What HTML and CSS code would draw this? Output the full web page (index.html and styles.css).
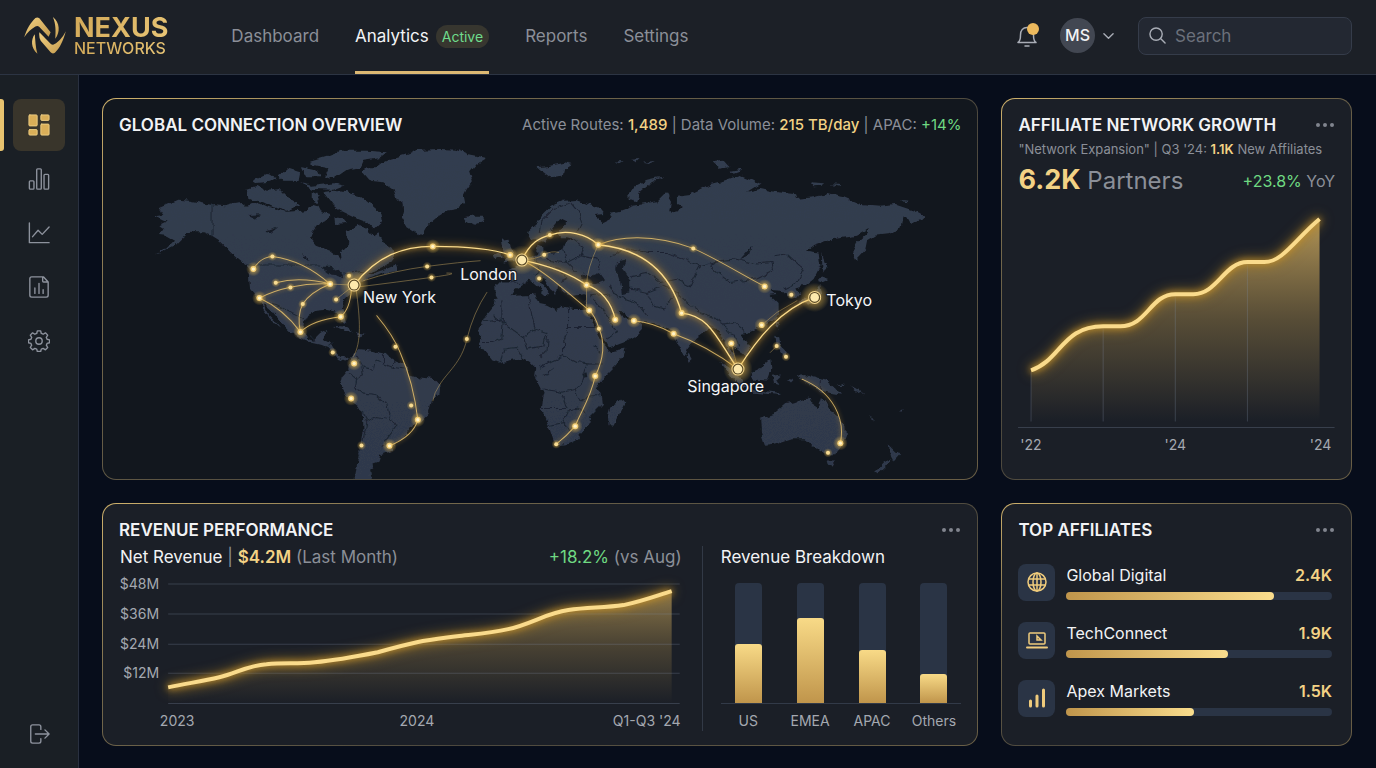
FILE: index.html
```html
<!DOCTYPE html>
<html lang="en">
<head>
  <meta charset="UTF-8" />
  <meta name="viewport" content="width=device-width, initial-scale=1.0"/>
  <title>Nexus Networks - Analytics</title>
  <link rel="stylesheet" href="styles.css">
</head>
<body>

  <header class="topbar">
    <a class="logo" href="#">
      <svg class="logo-mark" viewBox="0 0 126 112" aria-hidden="true">
        <defs>
          <linearGradient id="gold" x1="0" y1="0" x2="1" y2="1">
            <stop offset="0" stop-color="#f3d283"/>
            <stop offset="1" stop-color="#c2994c"/>
          </linearGradient>
        </defs>
        <path fill="url(#gold)" d="M0 61C8 36 20 16 34 3Q40-1 46 4L80 46L74 60L46 30Q40 25 34 29C22 36 10 46 0 61Z"/>
        <path fill="url(#gold)" d="M126 43C118 72 108 94 93 108Q86 113 80 107L50 72Q44 62 46 46L80 81Q86 86 92 82C104 75 116 63 126 43Z"/>
        <path fill="url(#gold)" d="M32 52C20 68 20 94 40 111C34 90 34 72 32 52Z"/>
        <path fill="url(#gold)" d="M87 0C108 16 110 46 94 66C96 42 96 22 87 0Z"/>
      </svg>
      <span class="logo-text">
        <span class="logo-name">NEXUS</span>
        <span class="logo-sub">NETWORKS</span>
      </span>
    </a>

    <nav class="nav">
      <a href="#">Dashboard</a>
      <a href="#" class="current">Analytics <span class="pill">Active</span></a>
      <a href="#">Reports</a>
      <a href="#">Settings</a>
    </nav>

    <div class="tools">
      <button class="bell" aria-label="Notifications">
        <svg viewBox="0 0 24 24"><path d="M3 18.500C5.500 17 5.500 14 5.500 11C5.500 6.500 8 3.500 12 3.500S18.500 6.500 18.500 11C18.500 14 18.500 17 21 18.500ZM10 22h4"/></svg>
        <span class="bell-dot"></span>
      </button>
      <button class="user" aria-label="Account">
        <span class="avatar">MS</span>
        <svg viewBox="0 0 12 12"><path d="M1 3.500l5 5 5-5"/></svg>
      </button>
      <label class="search">
        <svg viewBox="0 0 18 18"><circle cx="7.500" cy="7.500" r="6.500"/><path d="M12.500 12.500L17 17"/></svg>
        <input type="search" placeholder="Search" aria-label="Search" />
      </label>
    </div>
  </header>

  <div class="shell">
    <aside class="sidebar">
      <a href="#" class="side-link active" aria-label="Overview">
        <svg viewBox="0 0 24 24" class="solid"><rect x="1" y="1" width="9" height="12" rx="1"/><rect x="14" y="1" width="9" height="6" rx="1"/><rect x="1" y="17" width="9" height="6" rx="1"/><rect x="14" y="11" width="9" height="12" rx="1"/></svg>
      </a>
      <a href="#" class="side-link" aria-label="Statistics">
        <svg viewBox="0 0 24 24"><rect x="1.500" y="14" width="5" height="9" rx="1"/><rect x="9.500" y="1" width="5" height="22" rx="1"/><rect x="17.500" y="7" width="5" height="16" rx="1"/></svg>
      </a>
      <a href="#" class="side-link" aria-label="Trends">
        <svg viewBox="0 0 24 24"><path d="M1.500 1v21.500H23M5 16l6-7 4.500 4.500L23 5.500"/></svg>
      </a>
      <a href="#" class="side-link" aria-label="Reports">
        <svg viewBox="0 0 24 24"><path d="M4 1h13l5 5.500V21a2 2 0 0 1-2 2H4a2 2 0 0 1-2-2V3a2 2 0 0 1 2-2ZM16 1v4.500a1 1 0 0 0 1 1h5M7.500 13v6M12 8v11M16.500 15v4"/></svg>
      </a>
      <a href="#" class="side-link" aria-label="Settings">
        <svg viewBox="0 0 24 24"><circle cx="12" cy="12" r="3.500"/><path d="M10.200 1h3.600l.7 2.800 2 .8 2.500-1.500 2.500 2.500-1.500 2.500.8 2 2.700.6v3.200l-2.700.7-.8 2 1.500 2.500-2.500 2.500-2.500-1.500-2 .8-.7 2.600h-3.600l-.7-2.600-2-.8L5 21.600l-2.500-2.500L4 16.600l-.8-2L.5 13.900v-3.200l2.700-.6.8-2-1.500-2.500L5 3.100l2.500 1.500 2-.8Z"/></svg>
      </a>
      <a href="#" class="side-link logout" aria-label="Log out">
        <svg viewBox="0 0 24 24"><path d="M14 7V4a2 2 0 0 0-2-2H5a2 2 0 0 0-2 2v16a2 2 0 0 0 2 2h7a2 2 0 0 0 2-2v-3M8 12h15M18.500 7.500L23 12l-4.500 4.500"/></svg>
      </a>
    </aside>

    <main class="grid">

      <section class="card map-card">
        <div class="card-head">
          <h2>GLOBAL CONNECTION OVERVIEW</h2>
          <p class="stats">Active Routes: <b>1,489</b> <i>|</i> Data Volume: <b>215 TB/day</b> <i>|</i> APAC: <em>+14%</em></p>
        </div>
        <svg class="map" viewBox="103 144 874 336" role="img" aria-label="World map of active routes">
          <defs>
            <filter id="coast" x="0" y="0" width="1" height="1">
              <feTurbulence type="fractalNoise" baseFrequency="0.12" numOctaves="3" seed="4"/>
              <feDisplacementMap in="SourceGraphic" scale="6" xChannelSelector="R" yChannelSelector="G"/>
            </filter>
            <linearGradient id="landFill" gradientUnits="userSpaceOnUse" x1="0" y1="450" x2="0" y2="1440">
              <stop offset="0" stop-color="#333d4f"/>
              <stop offset="1" stop-color="#2f394b"/>
            </linearGradient>
            <radialGradient id="halo">
              <stop offset="0" stop-color="#f0c050" stop-opacity=".75"/>
              <stop offset="1" stop-color="#f0c050" stop-opacity="0"/>
            </radialGradient>
            <g id="dot">
              <circle r="22" fill="url(#halo)"/>
              <circle r="9" fill="#f3cf78"/>
              <circle r="5" fill="#fff3c8"/>
            </g>
            <g id="small">
              <circle r="14" fill="url(#halo)"/>
              <circle r="6" fill="#f8dc93"/>
            </g>
            <g id="hub">
              <circle r="44" fill="url(#halo)"/>
              <circle r="18" fill="#5a4a26" stroke="#f5d890" stroke-width="3"/>
              <circle r="13" fill="#fde9ac"/>
            </g>
          </defs>

          <g filter="url(#coast)">
            <g transform="scale(.33333)">
              <g class="land">
                <!-- north america -->
                <path d="M465 652L490 648L475 628L505 615L535 602L570 605L636 618L675 622L700 615L730 612L740 620L760 615L775 610L800 622L830 632L860 638L900 636L925 632L940 615L955 620L965 640L990 648L990 658L960 670L940 695L933 720L950 740L990 755L1010 770L1025 785L1022 760L1045 735L1040 700L1055 685L1070 675L1100 690L1120 710L1135 700L1150 730L1180 750L1185 770L1170 790L1150 802L1120 815L1100 830L1150 812L1190 795L1197 815L1150 822L1120 835L1090 845L1075 860L1058 872L1055 880L1035 900L1028 925L1035 950L1040 968L1032 975L1020 955L1005 940L980 935L950 938L925 950L915 970L912 990L918 1005L922 1020L940 1025L960 1005L982 992L970 1025L990 1030L1005 1055L1020 1070L1050 1078L1035 1084L1010 1074L985 1047L960 1037L930 1030L900 1020L875 1005L855 985L835 960L815 935L790 915L805 945L820 960L840 985L825 975L808 953L790 930L775 900L750 870L745 810L730 790L705 770L685 750L660 725L636 710L610 700L585 700L570 698L550 715L525 740L495 755L465 763L505 745L525 725L500 710L480 708L490 690L475 680L500 668Z"/>
                <!-- arctic islands -->
                <path d="M740 570L770 560L800 575L840 570L870 600L900 620L860 635L820 625L790 610L745 600ZM755 545L800 525L830 535L810 548L765 552ZM860 508L900 520L895 545L850 545L835 530ZM900 552L940 560L1000 553L1030 560L1000 572L940 570ZM930 485L980 470L1020 455L1100 455L1160 460L1140 475L1090 482L1080 505L1040 512L1000 540L975 530L985 508L940 498ZM970 580L1000 575L1040 580L1080 592L1110 615L1140 640L1145 665L1120 690L1100 670L1060 655L1020 635L1000 620L985 600ZM1003 655L1030 658L1040 672L1005 675ZM935 578L962 590L952 612L935 605ZM905 505L950 515L960 535L920 535Z"/>
                <!-- greenland, iceland -->
                <path d="M1085 515L1100 505L1130 505L1150 490L1170 480L1220 465L1250 453L1320 450L1370 452L1400 465L1460 477L1430 495L1410 520L1418 545L1400 570L1390 590L1395 615L1370 630L1340 635L1310 655L1280 680L1265 708L1245 700L1222 685L1205 655L1215 620L1190 600L1180 570L1150 550L1110 545ZM1390 655L1415 650L1445 650L1452 665L1425 677L1400 670Z"/>
                <path d="M1000 980L1035 983L1062 1000L1035 995ZM1067 1000L1097 1005L1075 1012Z"/>
                <!-- south america -->
                <path d="M1060 1065L1075 1050L1095 1052L1130 1058L1160 1065L1175 1080L1215 1095L1225 1125L1260 1135L1300 1140L1318 1158L1315 1180L1295 1205L1285 1245L1260 1270L1235 1280L1220 1300L1205 1320L1190 1330L1175 1340L1180 1355L1140 1370L1135 1385L1120 1390L1122 1405L1110 1415L1118 1450L1062 1450L1070 1400L1080 1340L1090 1290L1088 1235L1055 1210L1035 1180L1020 1155L1025 1130L1045 1105L1050 1080Z"/>
                <!-- europe and asia -->
                <path d="M1580 715L1582 695L1610 670L1630 645L1655 620L1690 605L1730 603L1760 615L1800 630L1812 645L1780 648L1805 670L1835 655L1830 642L1860 635L1900 620L1935 615L1970 610L1985 595L2000 580L2015 605L2010 640L2030 645L2050 625L2030 615L2030 590L2070 585L2090 575L2130 555L2170 545L2220 528L2250 540L2278 555L2240 578L2280 570L2320 578L2380 585L2385 600L2440 595L2480 585L2530 595L2580 615L2640 620L2680 615L2740 635L2775 655L2740 668L2710 655L2705 680L2670 705L2625 710L2600 725L2595 750L2565 782L2555 760L2570 730L2600 705L2605 690L2570 710L2500 720L2440 740L2420 755L2455 760L2460 800L2440 840L2415 860L2388 868L2397 885L2385 900L2367 895L2345 875L2310 873L2330 888L2310 890L2335 915L2335 940L2320 960L2300 975L2270 990L2245 1000L2225 1005L2235 1025L2250 1050L2235 1070L2220 1060L2200 1045L2193 1030L2190 1045L2200 1070L2212 1100L2195 1085L2185 1050L2175 1025L2165 1020L2155 1000L2145 988L2130 985L2110 1000L2085 1020L2065 1045L2055 1072L2045 1065L2030 1035L2018 1005L2005 990L1980 980L1940 970L1910 968L1880 950L1860 933L1855 935L1870 955L1890 963L1910 965L1925 975L1925 990L1900 1015L1870 1030L1830 1045L1820 1040L1805 1010L1795 990L1775 950L1765 930L1760 910L1758 895L1755 885L1720 890L1690 885L1685 865L1670 860L1668 885L1650 870L1635 845L1620 835L1615 843L1640 872L1650 880L1638 892L1628 875L1600 850L1585 845L1570 855L1545 870L1530 895L1500 910L1487 890L1485 850L1530 850L1535 830L1520 815L1540 805L1570 790L1590 775L1610 765L1615 740L1630 745L1628 760L1660 760L1690 750L1695 730L1720 720L1700 715L1680 715L1675 700L1700 670L1680 660L1655 690L1645 710L1640 730L1625 730L1610 720L1590 722Z"/>
                <path d="M1505 725L1525 722L1530 745L1547 770L1545 785L1510 790L1520 770L1510 755ZM1480 765L1500 755L1505 772L1488 780Z"/>
                <path d="M1612 505L1650 500L1690 492L1715 498L1695 510L1690 530L1650 535L1630 520ZM1880 595L1900 565L1940 545L1988 535L1945 556L1918 578L1908 606ZM2140 490L2170 485L2188 505L2160 508ZM2190 515L2220 510L2225 515L2200 524ZM2430 550L2475 553L2470 560L2440 562ZM2490 556L2518 558L2510 563ZM2702 600L2725 602L2715 608ZM1840 488L1870 486L1860 493ZM1890 482L1915 480L1905 490ZM1925 488L1965 482L1945 492Z"/>
                <path d="M2465 755L2472 790L2481 798L2466 820ZM2465 832L2487 840L2465 850L2453 846ZM2460 855L2466 890L2440 915L2415 912L2390 922L2410 900L2440 895L2450 870ZM2325 968L2337 965L2332 990Z"/>
                <!-- africa -->
                <path d="M1485 900L1510 895L1545 890L1595 888L1605 885L1615 915L1640 920L1670 935L1680 920L1720 930L1757 930L1775 965L1790 1000L1805 1030L1820 1050L1828 1057L1875 1048L1870 1070L1845 1100L1810 1135L1790 1165L1802 1190L1805 1215L1770 1250L1768 1270L1750 1295L1725 1325L1700 1335L1670 1338L1660 1325L1645 1280L1622 1230L1625 1200L1630 1180L1615 1150L1602 1130L1605 1105L1590 1090L1570 1080L1540 1085L1495 1093L1475 1085L1450 1055L1435 1035L1440 1005L1435 990L1455 950L1480 920ZM1865 1198L1872 1215L1855 1250L1840 1280L1825 1278L1823 1250L1830 1225L1850 1215ZM2065 1063L2074 1080L2065 1088L2060 1075Z"/>
                <!-- south east asia, oceania -->
                <path d="M2325 1010L2337 1015L2340 1040L2355 1055L2365 1080L2345 1067L2330 1040ZM2160 1088L2185 1103L2225 1143L2240 1168L2225 1166L2192 1133ZM2253 1120L2285 1105L2310 1083L2313 1110L2300 1144L2265 1142ZM2315 1130L2342 1126L2328 1140L2337 1158L2318 1152ZM2250 1172L2300 1177L2345 1182L2335 1188L2255 1180ZM2395 1130L2415 1128L2440 1135L2480 1145L2505 1165L2522 1187L2490 1182L2465 1175L2440 1165L2410 1148ZM2508 1158L2535 1150L2530 1158ZM2550 1158L2570 1168L2595 1188L2565 1172ZM2605 1248L2628 1262L2618 1260ZM2693 1234L2708 1224L2703 1234ZM2360 1140L2380 1142L2372 1150Z"/>
                <path d="M2280 1260L2320 1245L2355 1215L2380 1210L2395 1205L2425 1195L2428 1210L2455 1228L2465 1193L2475 1210L2490 1235L2510 1250L2535 1280L2537 1310L2525 1340L2505 1365L2475 1365L2455 1355L2440 1340L2430 1335L2410 1320L2375 1320L2330 1335L2295 1340L2282 1300ZM2482 1384L2507 1384L2497 1402L2486 1400ZM2665 1338L2685 1358L2702 1362L2680 1387L2672 1372ZM2670 1380L2658 1402L2635 1424L2623 1420L2650 1390Z"/>
              </g>
              <g class="lakes">
                <path d="M1750 823L1770 835L1800 823L1814 842L1790 852L1755 852L1745 840ZM1850 790L1880 783L1870 810L1890 840L1890 880L1865 885L1860 850L1848 815ZM2220 780L2245 752L2254 743L2245 770ZM962 803L990 803L1022 815L1030 838L1010 828L990 826L970 812ZM745 648L782 646L770 660ZM793 698L835 684L812 702ZM910 758L924 785L912 775ZM1746 1124L1762 1120L1764 1134L1750 1136Z"/>
              </g>
              <g class="borders">
                <path d="M636 618V710M740 798H960M1030 825L1100 815M778 905L830 920L880 945L915 962M925 1005L945 1025M1000 1030L985 1042"/>
                <path d="M1070 1070L1090 1105L1120 1110L1125 1085L1150 1095L1180 1105L1210 1110M1045 1120L1070 1140L1090 1130L1085 1105M1070 1140L1065 1165L1090 1185L1130 1190L1160 1215L1165 1245L1190 1280L1160 1320L1145 1340M1090 1235L1100 1270L1130 1255L1160 1260M1100 1270L1090 1320L1075 1380M1150 1065L1150 1095M1180 1080V1105"/>
                <path d="M1505 900V960L1450 965M1510 960L1505 1020M1480 950L1570 1015L1605 990L1595 950L1585 890M1705 925V985H1790M1705 990L1690 1030M1570 1015L1580 1050L1630 1040L1640 1000L1605 990M1690 1030V1070L1645 1090L1615 1105M1690 1070L1730 1090L1765 1095L1810 1095M1760 1100L1745 1150L1725 1170L1685 1180L1630 1170M1625 1228H1700L1685 1185M1725 1170L1740 1210L1765 1190L1800 1190M1645 1280L1690 1270L1705 1235L1735 1230L1755 1240M1690 1270L1710 1295L1735 1265M1440 1030L1480 1030L1505 1020M1500 1090L1510 1050L1550 1045L1570 1080M1620 1075L1640 1055L1645 1010M1780 1040L1800 1060M1630 1130L1660 1110"/>
                <path d="M1620 700L1625 665L1660 630L1710 610L1735 640L1745 670L1730 700M1720 720L1750 740L1740 770L1700 790L1640 780M1690 750L1700 790L1730 820M1740 770L1790 780L1800 810M1600 770L1620 810L1600 830M1530 850L1570 855M1640 800L1680 810L1700 840L1680 850M1830 770L1880 750L1940 760L2000 760L2070 790L2100 800L2155 785M1890 830L1940 820L1980 850L2030 840L2070 860L2100 800M1890 870L1940 880L1960 920L1990 930M1830 860L1850 890L1910 910L1940 950M1940 880L1990 860L2030 880L2060 910L2100 940L2140 955L2170 975L2200 970L2235 1000M1990 930L2010 900L2030 880M1780 900L1820 950L1850 1000L1820 1020M1770 890L1830 885M2155 785L2205 780L2270 795L2315 790L2320 815L2270 840L2190 850L2150 820L2130 800ZM2320 770L2360 765L2410 810L2390 850L2350 870M2110 970L2140 985M2170 975L2185 1000L2205 1005L2215 1045M2460 1140V1175"/>
              </g>
            </g>
          </g>

          <g transform="scale(.33333)">
            <g class="route thin">
              <path d="M1090 845Q1180 815 1281 802T1440 785"/>
              <path d="M1062 865Q1200 848 1294 835T1340 822"/>
              <path d="M1068 870C1080 960 1085 1030 1060 1072"/>
              <path d="M1460 880Q1420 940 1400 1020C1385 1090 1340 1120 1318 1158Q1302 1180 1298 1205"/>
              <path d="M1565 783Q1610 780 1632 767T1675 760"/>
              <path d="M1794 737Q1760 810 1759 858V930"/>
              <path d="M2284 978L2330 940L2390 905M2193 1033L2213 1110M2329 1041L2310 1060"/>
              <path d="M1008 901L1062 858L990 855"/>
            </g>
            <g class="route mid">
              <path d="M760 810C780 775 810 772 817 772C880 780 940 810 990 855"/>
              <path d="M827 851Q900 832 990 855M778 897C830 870 910 850 990 855"/>
              <path d="M901 999Q890 950 908 915Q930 880 990 855M778 897Q850 930 901 999"/>
              <path d="M901 999C930 970 980 958 1022 953Q1050 930 1054 870"/>
              <path d="M1794 737C1850 715 1950 700 2079 748C2160 785 2230 830 2293 862"/>
              <path d="M1565 783C1640 820 1700 880 1767 934Q1785 950 1796 988C1815 1030 1810 1080 1785 1131C1770 1200 1740 1240 1725 1281Q1700 1310 1668 1335"/>
              <path d="M1901 965Q1960 970 2020 1004Q2120 1040 2213 1110"/>
              <path d="M2405 1140C2500 1180 2535 1260 2520 1332"/>
              <path d="M1130 950Q1180 1010 1200 1060Q1240 1150 1253 1262Q1240 1310 1168 1340"/>
            </g>
            <g class="route strong">
              <path d="M1062 858C1130 770 1210 742 1298 742S1480 750 1530 768"/>
              <path d="M1565 783C1590 730 1620 715 1649 708C1700 690 1760 705 1794 737"/>
              <path d="M1565 783C1650 800 1720 830 1759 858C1800 870 1835 910 1845 962"/>
              <path d="M1794 737C1930 750 2010 820 2044 942C2130 950 2150 1020 2213 1110"/>
              <path d="M2213 1110C2270 1020 2340 930 2443 895"/>
            </g>

            <use href="#dot" x="760" y="810"/><use href="#small" x="817" y="772"/><use href="#small" x="827" y="851"/>
            <use href="#small" x="871" y="865"/><use href="#dot" x="778" y="897"/><use href="#dot" x="990" y="855"/>
            <use href="#small" x="908" y="915"/><use href="#small" x="1008" y="901"/><use href="#small" x="1047" y="830"/>
            <use href="#dot" x="901" y="999"/><use href="#dot" x="1022" y="953"/><use href="#small" x="998" y="1060"/>
            <use href="#dot" x="1062" y="1093"/><use href="#dot" x="1053" y="1198"/><use href="#small" x="1233" y="1219"/>
            <use href="#dot" x="1253" y="1262"/><use href="#dot" x="1168" y="1340"/><use href="#small" x="1084" y="1339"/>
            <use href="#small" x="1186" y="1043"/><use href="#small" x="1400" y="1020"/><use href="#dot" x="1298" y="742"/>
            <use href="#small" x="1281" y="802"/><use href="#small" x="1294" y="835"/><use href="#dot" x="1530" y="768"/>
            <use href="#small" x="1649" y="708"/><use href="#dot" x="1794" y="737"/><use href="#small" x="2079" y="748"/>
            <use href="#dot" x="2293" y="862"/><use href="#small" x="1632" y="767"/><use href="#small" x="1617" y="838"/>
            <use href="#dot" x="1759" y="858"/><use href="#dot" x="1767" y="934"/><use href="#small" x="1796" y="989"/>
            <use href="#dot" x="1845" y="962"/><use href="#dot" x="1901" y="965"/><use href="#dot" x="2020" y="1004"/>
            <use href="#dot" x="2044" y="942"/><use href="#dot" x="1785" y="1131"/><use href="#dot" x="1725" y="1281"/>
            <use href="#small" x="1668" y="1335"/><use href="#dot" x="2193" y="1033"/><use href="#dot" x="2284" y="978"/>
            <use href="#small" x="2373" y="887"/><use href="#small" x="2329" y="1041"/><use href="#small" x="2357" y="1073"/>
            <use href="#dot" x="2520" y="1332"/><use href="#small" x="2483" y="1361"/>
            <use href="#hub" x="1062" y="858"/><use href="#hub" x="1565" y="783"/><use href="#hub" x="2443" y="895"/><use href="#hub" x="2213" y="1110"/>
          </g>

          <g class="city">
            <text x="363" y="304">New York</text>
            <text x="460" y="281">London</text>
            <text x="826" y="307">Tokyo</text>
            <text x="687" y="393">Singapore</text>
          </g>
        </svg>
      </section>

      <section class="card">
        <div class="card-head">
          <h2>AFFILIATE NETWORK GROWTH</h2>
          <button class="more" aria-label="More options"><span></span><span></span><span></span></button>
        </div>
        <p class="note">"Network Expansion" | Q3 '24: <b>1.1K</b> New Affiliates</p>
        <div class="figure">
          <p class="partners"><b>6.2K</b> Partners</p>
          <p class="yoy"><em>+23.8%</em> YoY</p>
        </div>
        <svg class="growth" viewBox="1018 204 316 256" role="img" aria-label="Partner growth, '22 to '24">
          <defs>
            <linearGradient id="areaFill" x1="0" y1="0" x2="0" y2="1">
              <stop offset="0" stop-color="#e6be68" stop-opacity=".75"/>
              <stop offset=".5" stop-color="#b8964f" stop-opacity=".38"/>
              <stop offset="1" stop-color="#b8964f" stop-opacity="0"/>
            </linearGradient>
          </defs>
          <path fill="url(#areaFill)" d="M1031 371C1061 361 1062 327 1103 327H1120C1147 327 1150 295 1175 295H1193C1217 295 1224 263 1247 263H1264C1282 263 1295 240 1319 220V422H1031Z"/>
          <path class="gridline" d="M1031 373V422M1103 328V422M1175 296V422M1247 264V422"/>
          <path class="gridline" d="M1018 428H1334"/>
          <path class="line" d="M1031 371C1061 361 1062 327 1103 327H1120C1147 327 1150 295 1175 295H1193C1217 295 1224 263 1247 263H1264C1282 263 1295 240 1319 220"/>
          <g class="axis middle">
            <text x="1031" y="451">'22</text>
            <text x="1175" y="451">'24</text>
            <text x="1320" y="451">'24</text>
          </g>
        </svg>
      </section>

      <section class="card">
        <div class="card-head">
          <h2>REVENUE PERFORMANCE</h2>
          <button class="more" aria-label="More options"><span></span><span></span><span></span></button>
        </div>
        <div class="revenue">
          <div class="revenue-main">
            <div class="revenue-head">
              <p><strong>Net Revenue</strong> <i>|</i> <b>$4.2M</b> (Last Month)</p>
              <p><em>+18.2%</em> (vs Aug)</p>
            </div>
            <svg class="revenue-chart" viewBox="120 573 560 157" role="img" aria-label="Net revenue, 2023 to Q3 '24">
              <path class="area" fill="url(#areaFill)" d="M168 687C187 683 202 681 219 677C236 673 248 665 266 664C284 662 296 664 314 662C336 660 357 656 377 652C391 648 402 645 416 642C430 639 441 638 456 636C474 634 490 633 507 629C530 624 545 613 567 610C586 607 602 608 622 605C641 601 651 597 670 591V703H168Z"/>
              <path class="gridline" d="M168 584H678M168 614H678M168 644H678M168 673H678M168 703H678"/>
              <path class="line" d="M168 687C187 683 202 681 219 677C236 673 248 665 266 664C284 662 296 664 314 662C336 660 357 656 377 652C391 648 402 645 416 642C430 639 441 638 456 636C474 634 490 633 507 629C530 624 545 613 567 610C586 607 602 608 622 605C641 601 651 597 670 591"/>
              <g class="axis end">
                <text x="159" y="589">$48M</text>
                <text x="159" y="619">$36M</text>
                <text x="159" y="649">$24M</text>
                <text x="159" y="678">$12M</text>
                <text x="679" y="726">Q1-Q3 '24</text>
              </g>
              <g class="axis middle">
                <text x="177" y="726">2023</text>
                <text x="416" y="726">2024</text>
              </g>
            </svg>
          </div>
          <div class="breakdown">
            <h3>Revenue Breakdown</h3>
            <div class="bars">
              <div class="bar"><div style="height: 49%"></div></div>
              <div class="bar"><div style="height: 71%"></div></div>
              <div class="bar"><div style="height: 44%"></div></div>
              <div class="bar"><div style="height: 24%"></div></div>
            </div>
            <div class="bar-labels">
              <span>US</span><span>EMEA</span><span>APAC</span><span>Others</span>
            </div>
          </div>
        </div>
      </section>

      <section class="card">
        <div class="card-head">
          <h2>TOP AFFILIATES</h2>
          <button class="more" aria-label="More options"><span></span><span></span><span></span></button>
        </div>
        <ul class="affiliates">
          <li>
            <span class="tile"><svg viewBox="0 0 22 22"><circle cx="11" cy="11" r="9"/><ellipse cx="11" cy="11" rx="4" ry="9"/><path d="M11 2v18M3 8h16M3 14h16"/></svg></span>
            <div class="affiliate">
              <div class="affiliate-head"><span>Global Digital</span><b>2.4K</b></div>
              <div class="track"><div style="width: 78%"></div></div>
            </div>
          </li>
          <li>
            <span class="tile"><svg viewBox="0 0 22 22"><rect x="3" y="4" width="16" height="11" rx="1"/><path d="M1 18.500h20" stroke-width="2"/><path d="M11 7v4h4l-2-2Z"/></svg></span>
            <div class="affiliate">
              <div class="affiliate-head"><span>TechConnect</span><b>1.9K</b></div>
              <div class="track"><div style="width: 61%"></div></div>
            </div>
          </li>
          <li>
            <span class="tile"><svg viewBox="0 0 22 22"><path d="M4.500 19v-5M11 19V9M17.500 19V3" stroke-width="3"/></svg></span>
            <div class="affiliate">
              <div class="affiliate-head"><span>Apex Markets</span><b>1.5K</b></div>
              <div class="track"><div style="width: 48%"></div></div>
            </div>
          </li>
        </ul>
      </section>

    </main>
  </div>

</body>
</html>
```

FILE: styles.css
```css
* {
  box-sizing: border-box;
}

body {
  margin: 0;
  min-height: 100vh;
  display: flex;
  flex-direction: column;
  background: #070d1b;
  color: #f2f3f5;
  font-family: Inter, "Liberation Sans", sans-serif;
  font-size: 16px;
}

h2, h3, p, ul {
  margin: 0;
  padding: 0;
}

a {
  color: inherit;
  text-decoration: none;
}

button {
  padding: 0;
  border: none;
  background: none;
  color: inherit;
  font: inherit;
  cursor: pointer;
}

svg {
  display: block;
}

i {
  font-style: normal;
}

em {
  font-style: normal;
  color: #6fd982;
}

b {
  font-weight: 600;
  color: #f3d285;
}

/* top bar */
.topbar {
  display: flex;
  align-items: center;
  height: 75px;
  padding: 0 24px;
  background: #1c2027;
  border-bottom: 1px solid #2c3443;
}

.logo {
  display: flex;
  align-items: center;
  gap: 8px;
  padding-bottom: 3px;
}

.logo-mark {
  width: 42px;
  height: 37px;
}

.logo-text span {
  display: block;
  background: linear-gradient(135deg, #d2a857, #e9c677);
  -webkit-background-clip: text;
  background-clip: text;
  color: transparent;
}

.logo-name {
  font-size: 27px;
  line-height: 24px;
  font-weight: 700;
}

.logo-sub {
  font-size: 16px;
  line-height: 16px;
  font-weight: 500;
}

.nav {
  display: flex;
  align-self: stretch;
  gap: 36px;
  margin-left: 63px;
}

.nav a {
  display: flex;
  align-items: center;
  gap: 7px;
  padding-top: 1px;
  border-bottom: 3px solid transparent;
  color: #8b8f98;
  font-size: 17px;
}

.nav a.current {
  color: #f2f3f5;
  border-color: #dcb873;
}

.pill {
  padding: 0 6px;
  border-radius: 12px;
  background: #37362f;
  color: #6fdc8c;
  font-size: 14px;
  line-height: 23px;
}

.tools {
  display: flex;
  align-items: center;
  margin-left: auto;
  padding-bottom: 3px;
}

.tools svg {
  fill: none;
  stroke: #a9adb6;
  stroke-width: 1.5;
  stroke-linecap: round;
  stroke-linejoin: round;
}

.bell {
  position: relative;
}

.bell svg {
  width: 24px;
  height: 24px;
}

.bell-dot {
  position: absolute;
  top: -1px;
  right: 0;
  width: 12px;
  height: 12px;
  border-radius: 50%;
  background: #ecb95d;
}

.user {
  display: flex;
  align-items: center;
  gap: 8px;
  margin: 0 24px 0 21px;
}

.user svg {
  width: 11px;
  height: 12px;
}

.avatar {
  width: 35px;
  border-radius: 50%;
  background: #424752;
  line-height: 35px;
  font-weight: 500;
}

.search {
  display: flex;
  align-items: center;
  gap: 9px;
  width: 214px;
  height: 38px;
  padding: 0 10px;
  border: 1px solid #353c4a;
  border-radius: 8px;
  background: #232832;
}

.search svg {
  flex: none;
  width: 17px;
  height: 17px;
}

.search input {
  width: 100%;
  padding: 0;
  border: none;
  outline: none;
  background: none;
  color: #f2f3f5;
  font: inherit;
  font-size: 17px;
}

.search input::placeholder {
  color: #6b707b;
}

/* sidebar */
.shell {
  flex: 1;
  display: flex;
}

.sidebar {
  flex: none;
  display: flex;
  flex-direction: column;
  gap: 2px;
  width: 79px;
  padding: 24px 13px 8px;
  background: #1a1f25;
  border-right: 1px solid #293040;
}

.side-link {
  position: relative;
  display: flex;
  align-items: center;
  justify-content: center;
  width: 52px;
  height: 52px;
  border-radius: 8px;
}

.side-link svg {
  width: 22px;
  height: 22px;
  fill: none;
  stroke: #8d929d;
  stroke-width: 1.5;
  stroke-linecap: round;
  stroke-linejoin: round;
}

.side-link svg.solid {
  fill: #d9ae58;
  stroke: #f0d084;
  stroke-width: 1;
}

.side-link.active {
  background: #39352b;
}

.side-link.active::before {
  content: "";
  position: absolute;
  left: -13px;
  width: 4px;
  height: 52px;
  border-radius: 0 3px 3px 0;
  background: #e8c36f;
}

.logout {
  margin-top: auto;
}

/* cards */
.grid {
  flex: 1;
  min-width: 0;
  display: grid;
  grid-template-columns: minmax(0, 5fr) minmax(0, 2fr);
  grid-template-rows: 11fr 7fr;
  gap: 23px;
  padding: 23px 24px 22px 23px;
}

.card {
  display: flex;
  flex-direction: column;
  padding: 16px 16px 6px;
  border: 1px solid transparent;
  border-radius: 14px;
  background:
    linear-gradient(#1b1f27, #1b1f27) padding-box,
    linear-gradient(150deg, #d0b26c, #75694c 25%, #4c483e 60%, #6a5f46) border-box;
}

.map-card {
  padding-bottom: 0;
  overflow: hidden;
  background:
    linear-gradient(#12171e, #12171e) padding-box,
    linear-gradient(150deg, #d0b26c, #75694c 25%, #4c483e 60%, #6a5f46) border-box;
}

.card-head {
  display: flex;
  justify-content: space-between;
  align-items: center;
}

h2 {
  font-size: 17px;
  line-height: 20px;
  font-weight: 600;
  white-space: nowrap;
}

h3 {
  font-size: 17px;
  line-height: 22px;
  font-weight: 400;
}

.stats {
  color: #8b8f98;
  font-size: 15px;
  line-height: 20px;
  white-space: nowrap;
}

.stats b {
  font-weight: 500;
}

.more {
  display: flex;
  gap: 3px;
  padding: 8px 1px;
}

.more span {
  width: 4px;
  height: 4px;
  border-radius: 50%;
  background: #81858e;
}

/* map */
.map {
  width: calc(100% + 32px);
  margin: auto -16px 0;
}

.land {
  fill: url(#landFill);
}

.lakes {
  fill: #171d26;
}

.borders {
  fill: none;
  stroke: #1d2430;
  stroke-width: 3;
}

.route {
  fill: none;
  stroke: #eac36c;
  stroke-linecap: round;
}

.thin {
  stroke-width: 2;
  opacity: .6;
}

.mid {
  stroke-width: 3;
  opacity: .85;
  filter: drop-shadow(0 0 6px #c89632);
}

.strong {
  stroke: #fbdc8c;
  stroke-width: 4;
  filter: drop-shadow(0 0 6px #dca53a) drop-shadow(0 0 12px #b9862a);
}

.city {
  fill: #f5f6f8;
  font-size: 16px;
  paint-order: stroke;
  stroke: #12171e;
  stroke-width: 2px;
}

/* affiliate growth */
.note {
  margin-top: 4px;
  color: #8b8f98;
  font-size: 13px;
  line-height: 20px;
  white-space: nowrap;
}

.figure {
  display: flex;
  justify-content: space-between;
  align-items: center;
  margin-top: 5px;
  color: #8b8f98;
}

.partners {
  font-size: 24px;
  line-height: 32px;
}

.partners b {
  font-size: 27px;
  font-weight: 700;
}

.yoy {
  font-size: 16px;
}

.growth {
  width: 100%;
  margin: auto 0 13px;
  overflow: visible;
}

.gridline {
  fill: none;
  stroke: #7d8aa3;
  stroke-opacity: .3;
}

.line {
  fill: none;
  stroke: #fadb8c;
  stroke-width: 4;
  filter: drop-shadow(0 0 3px #c8962f) drop-shadow(0 0 6px #a67a22);
}

.area {
  opacity: .75;
}

.axis {
  fill: #a4a8b0;
  font-size: 14px;
}

.middle {
  text-anchor: middle;
}

.end {
  text-anchor: end;
}

/* revenue */
.revenue {
  flex: 1;
  display: flex;
  margin-top: 6px;
}

.revenue-main {
  flex: 7;
  padding: 0 20px 0 1px;
}

.revenue-head {
  display: flex;
  justify-content: space-between;
  color: #8b8f98;
  font-size: 17px;
  line-height: 22px;
}

.revenue-head strong {
  color: #f2f3f5;
  font-weight: 400;
}

.revenue-chart {
  width: 100%;
  margin-top: 5px;
  overflow: visible;
}

.breakdown {
  flex: 3;
  display: flex;
  flex-direction: column;
  margin-bottom: 8px;
  padding-left: 18px;
  border-left: 1px solid #323946;
}

.bars {
  display: flex;
  justify-content: space-between;
  height: 121px;
  margin-top: 15px;
  padding: 0 14px;
  border-bottom: 1px solid #323a48;
}

.bar {
  display: flex;
  align-items: flex-end;
  width: 27px;
  border-radius: 4px 4px 0 0;
  background: #2a3445;
}

.bar div {
  width: 100%;
  border-radius: 3px 3px 0 0;
  background: linear-gradient(#f8da87, #c0954b);
}

.bar-labels {
  display: flex;
  justify-content: space-between;
  margin-top: 8px;
  color: #a4a8b0;
  font-size: 14px;
  line-height: 18px;
}

.bar-labels span {
  width: 55px;
  text-align: center;
}

/* top affiliates */
.affiliates {
  display: flex;
  flex-direction: column;
  gap: 21px;
  margin-top: 24px;
  list-style: none;
}

.affiliates li {
  display: flex;
  gap: 11px;
}

.tile {
  display: flex;
  align-items: center;
  justify-content: center;
  width: 37px;
  height: 37px;
  border-radius: 8px;
  background: #2a3445;
}

.tile svg {
  width: 22px;
  height: 22px;
  fill: none;
  stroke: #efcb7c;
  stroke-width: 1.5;
  stroke-linecap: round;
}

.affiliate {
  flex: 1;
  padding-right: 3px;
}

.affiliate-head {
  display: flex;
  justify-content: space-between;
  line-height: 22px;
}

.track {
  height: 8px;
  margin-top: 6px;
  border-radius: 4px;
  background: #2a3445;
}

.track div {
  height: 100%;
  border-radius: 4px;
  background: linear-gradient(90deg, #c0954b, #fadd8d);
}
```
